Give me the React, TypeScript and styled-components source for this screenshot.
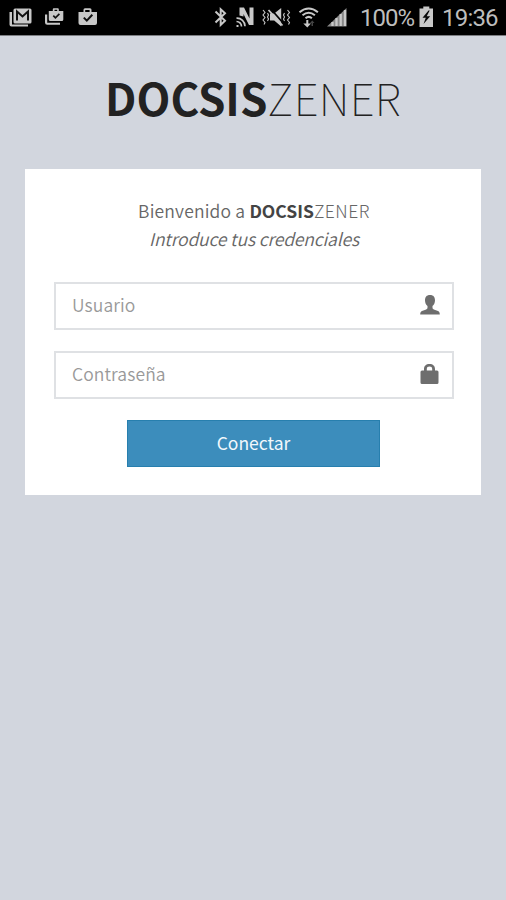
import React from 'react';
import styled, { createGlobalStyle } from 'styled-components';

const GlobalStyle = createGlobalStyle`
  *, *::before, *::after { box-sizing: border-box; }
  html, body { margin: 0; background: #d2d6de; }
  body { font-family: "Noto Sans CJK SC", "Noto Sans", sans-serif; color: #666; }
`;

const Screen = styled.div`
  min-height: 900px;
  display: flex;
  flex-direction: column;
  background: #d2d6de;
`;

const StatusBar = styled.header`
  height: 36px;
  flex: none;
  display: flex;
  justify-content: space-between;
  background: #000;
  border-bottom: 1px solid #7c7e82;
  color: #bdbdbd;
  font-family: Roboto, sans-serif;
`;

const StatusIcons = styled.svg<{ $width: number }>`
  display: block;
  flex: none;
  width: ${(p) => p.$width}px;
  height: 35px;
`;

const StatusGroup = styled.div`
  display: flex;
  align-items: center;
`;

const StatusText = styled.span<{ $width: number; $spacing?: number }>`
  width: ${(p) => p.$width}px;
  padding-top: 2px;
  font-size: 24px;
  line-height: 33px;
  white-space: nowrap;
  letter-spacing: ${(p) => p.$spacing ?? 0}px;
`;

const Logo = styled.h1`
  margin: 29px 0 0;
  height: 64px;
  line-height: 64px;
  font-size: 44px;
  font-weight: 100;
  letter-spacing: 0.3px;
  text-align: center;
  white-space: nowrap;
  color: #222;
`;

const LogoStrong = styled.b`
  font-weight: 700;
  letter-spacing: 0;
`;

const Card = styled.main`
  width: 456px;
  height: 326px;
  margin: 40px 0 0 25px;
  padding: 28px 27px 28px 29px;
  background: #fff;
`;

const Welcome = styled.p`
  margin: 0 0 29px;
  text-align: center;
  font-size: 17.5px;
  line-height: 28px;
  font-weight: 350;
  white-space: nowrap;
  color: #666;
`;

const Greeting = styled.span`
  letter-spacing: 0.18px;
`;

const Brand = styled.b`
  font-weight: 700;
  letter-spacing: 0;
  color: #444;
`;

const Thin = styled.span`
  font-weight: 300;
  letter-spacing: 0.5px;
`;

const Hint = styled.em`
  display: block;
  letter-spacing: -0.12px;
`;

const Form = styled.form`
  display: flex;
  flex-direction: column;
  align-items: center;
`;

const Field = styled.label`
  width: 100%;
  height: 48px;
  margin-bottom: 21px;
  display: flex;
  align-items: center;
  border: 2px solid #dfe1e4;
  padding: 0 12px 0 16px;
`;

const Input = styled.input`
  flex: 1;
  height: 28px;
  min-width: 0;
  margin-bottom: 2px;
  padding: 0;
  border: 0;
  outline: 0;
  background: none;
  font: 350 17.5px/28px "Noto Sans CJK SC", sans-serif;
  letter-spacing: 0.1px;
  color: #555;
  &::placeholder { color: #999; opacity: 1; }
`;

const FieldIcon = styled.svg`
  width: 20px;
  height: 22px;
  margin-bottom: 3px;
  flex: none;
  fill: #6e6e6e;
`;

const Submit = styled.button`
  width: 253px;
  height: 47px;
  margin-right: 1px;
  padding: 0 0 2px;
  border: 1px solid #277fae;
  background: #3c8dbc;
  color: #f2f8fc;
  font: 400 17.5px/28px "Noto Sans CJK SC", sans-serif;
`;

const Notifications = () => (
  <StatusIcons $width={110} viewBox="0 0 110 35" fill="#c8c8c8">
    <path d="M9.5 12v12.5a2 2 0 0 0 2 2H28v-2H12V12z" />
    <rect x="13.5" y="8.5" width="18" height="15" rx="1.5" />
    <path d="M17 20.5v-9l5.5 5 5.5-5v9" fill="none" stroke="#101010" strokeWidth="2" />
    <path d="M45 14.5v8a2.2 2.2 0 0 0 2.2 2.2H60v-2H47.2v-8.2z" />
    <path d="M48.8 11h4V9.300a1 1 0 0 1 1-1h4a1 1 0 0 1 1 1V11h4.500v8.500a1.500 1.500 0 0 1-1.500 1.500H50.300a1.500 1.500 0 0 1-1.500-1.500zM54.500 11h2.700V9.800h-2.700z" fillRule="evenodd" />
    <path d="m53.300 15.700 2.100 2.100 4-4" fill="none" stroke="#101010" strokeWidth="1.700" />
    <path d="M78.500 12h5V9.800a1.500 1.500 0 0 1 1.500-1.500h5a1.500 1.500 0 0 1 1.500 1.500V12H97v11a2 2 0 0 1-2 2H80.500a2 2 0 0 1-2-2zM85.200 12h4.400V10h-4.400z" fillRule="evenodd" />
    <path d="m83.800 17.600 3 3 5.500-5.800" fill="none" stroke="#101010" strokeWidth="2" />
  </StatusIcons>
);

const Connectivity = () => (
  <StatusIcons $width={148} viewBox="212 0 148 35" fill="#c8c8c8" stroke="#c8c8c8">
    <path d="m215.500 11.500 9.500 9.300-4.300 4.200V9.200l4.300 4-9.500 9.300" fill="none" strokeWidth="2" />
    <path d="M239.500 7.500h4.500l5.500 11V7.500h4V25h-4.500l-5.500-11v2.500l-4-1z" stroke="none" />
    <g fill="none" strokeWidth="1.700">
      <path d="M236.500 18.200a8 8 0 0 1 8.500 8M236.500 21.500a5 5 0 0 1 5 5" />
      <path d="M236.500 25h2v2h-2z" fill="#c8c8c8" stroke="none" />
      <path d="m263 10 2 2.500-2 2.500 2 2.500-2 2.500 2 2.500-1 2M267.500 13l1 2-1 2 1 2-1 2M284.500 13l-1 2 1 2-1 2 1 2M287.500 10l2 2.500-2 2.500 2 2.500-2 2.500 2 2.500-1 2" strokeWidth="1.100" />
    </g>
    <path d="M270 13.500h4.200l7-5.500v18.500l-7-6H270z" stroke="none" />
    <path d="m270.500 8.500 13 15" stroke="#000" strokeWidth="1.800" />
    <path d="m268.500 10 14 15.500" strokeWidth="1.800" />
    <g fill="none" strokeWidth="2">
      <path d="M299.500 12.300q9.200-7.500 18.400 0M302.500 15.300q6.200-5 12.400 0M305.500 18.200q3.200-2.700 6.400 0" />
    </g>
    <path d="M306.300 20v3.500h-3l4 4 3.700-4h-2.700V20z" stroke="none" />
    <path d="M311.500 26v-3H310l2.300-2.500 2.200 2.500H313v3z" fill="#444" stroke="none" />
    <path d="M327 26.500 346.500 8v18.500z" fill="#888" stroke="none" />
    <path d="M332.500 26v-4M336.500 26v-8M340.700 26V14M345 26V10" strokeWidth="2.300" />
  </StatusIcons>
);

const Battery = () => (
  <StatusIcons $width={25} viewBox="417 0 25 35" fill="#c8c8c8">
    <path d="M419.500 8.500h3.800v-2h6v2h3.700V27h-13.500z" />
    <path d="m428.500 10.500-6 7.300h3.300l-2.300 6.200 6.700-7.800h-3.500l3-5.700z" fill="#080808" />
  </StatusIcons>
);

export default function App() {
  return (
    <>
      <GlobalStyle />
      <Screen>
        <StatusBar>
          <Notifications />
          <StatusGroup>
            <Connectivity />
            <StatusText $width={57} $spacing={-1}>100%</StatusText>
            <Battery />
            <StatusText $width={64} $spacing={-0.8}>19:36</StatusText>
          </StatusGroup>
        </StatusBar>
        <Logo><LogoStrong>DOCSIS</LogoStrong>ZENER</Logo>
        <Card>
          <Welcome>
            <Greeting>Bienvenido a </Greeting><Brand>DOCSIS</Brand><Thin>ZENER</Thin>
            <Hint>Introduce tus credenciales</Hint>
          </Welcome>
          <Form onSubmit={(e) => e.preventDefault()}>
            <Field>
              <Input placeholder="Usuario" />
              <FieldIcon viewBox="0 0 20 22">
                <path d="M10 1C6.500 1 5 3.200 5 6.300c0 2.700 1 4.500 2.500 5.800v1.700c0 .8-.5 1.200-1.300 1.600L2 17C.8 17.500.2 18.500.2 20.500h19.600c0-2-.6-3-1.800-3.500l-4.200-1.600c-.8-.4-1.300-.8-1.300-1.600v-1.700C14 10.800 15 9 15 6.300 15 3.200 13.500 1 10 1z" />
              </FieldIcon>
            </Field>
            <Field>
              <Input type="password" placeholder="Contraseña" />
              <FieldIcon viewBox="0 0 20 22">
                <path fillRule="evenodd" d="M4 7.500V6C4 3 6 1 9.500 1S15 3 15 6v1.500h2A1.500 1.500 0 0 1 18.500 9v10.500A1.500 1.500 0 0 1 17 21H2a1.500 1.500 0 0 1-1.500-1.500V9A1.500 1.500 0 0 1 2 7.500zM6.800 7.500h5.400V6C12.200 4.300 11.300 3.500 9.500 3.500S6.800 4.300 6.800 6z" />
              </FieldIcon>
            </Field>
            <Submit type="submit">Conectar</Submit>
          </Form>
        </Card>
      </Screen>
    </>
  );
}
